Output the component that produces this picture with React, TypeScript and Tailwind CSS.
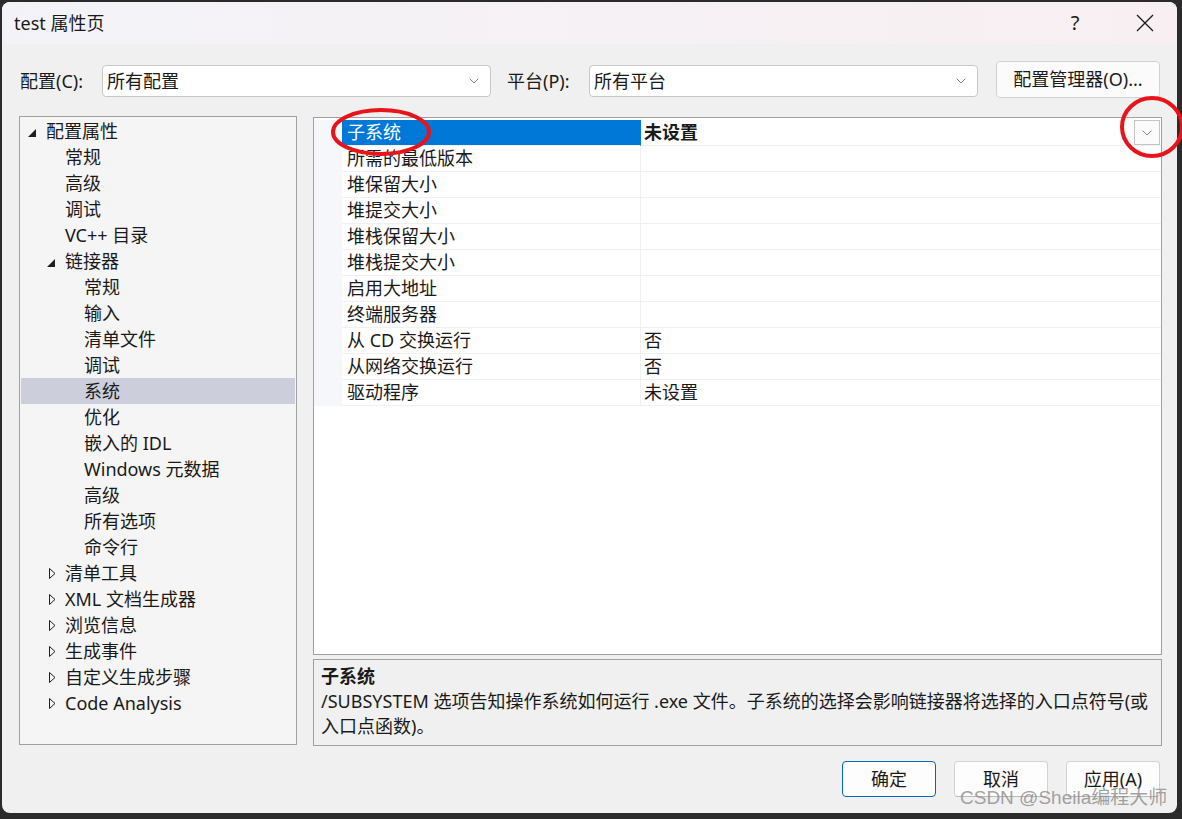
import { ChevronDown } from "lucide-react";

type TreeItem = { label: string; level: number; arrow?: "open" | "closed"; selected?: boolean };

const treeItems: TreeItem[] = [
  { label: "配置属性", level: 0, arrow: "open" },
  { label: "常规", level: 1 },
  { label: "高级", level: 1 },
  { label: "调试", level: 1 },
  { label: "VC++ 目录", level: 1 },
  { label: "链接器", level: 1, arrow: "open" },
  { label: "常规", level: 2 },
  { label: "输入", level: 2 },
  { label: "清单文件", level: 2 },
  { label: "调试", level: 2 },
  { label: "系统", level: 2, selected: true },
  { label: "优化", level: 2 },
  { label: "嵌入的 IDL", level: 2 },
  { label: "Windows 元数据", level: 2 },
  { label: "高级", level: 2 },
  { label: "所有选项", level: 2 },
  { label: "命令行", level: 2 },
  { label: "清单工具", level: 1, arrow: "closed" },
  { label: "XML 文档生成器", level: 1, arrow: "closed" },
  { label: "浏览信息", level: 1, arrow: "closed" },
  { label: "生成事件", level: 1, arrow: "closed" },
  { label: "自定义生成步骤", level: 1, arrow: "closed" },
  { label: "Code Analysis", level: 1, arrow: "closed" },
];

const indent = ["pl-[7px]", "pl-[26px]", "pl-[45px]"];

const props: [string, string][] = [
  ["子系统", "未设置"],
  ["所需的最低版本", ""],
  ["堆保留大小", ""],
  ["堆提交大小", ""],
  ["堆栈保留大小", ""],
  ["堆栈提交大小", ""],
  ["启用大地址", ""],
  ["终端服务器", ""],
  ["从 CD 交换运行", "否"],
  ["从网络交换运行", "否"],
  ["驱动程序", "未设置"],
];

function Combo({ value }: { value: string }) {
  return (
    <div className="mt-[3px] w-[389px] h-[32px] bg-white border border-[#c6c6c6] rounded-[4px] flex items-center pl-[4px] pr-[8px]">
      <span className="flex-1">{value}</span>
      <ChevronDown className="w-[16px] h-[16px] text-[#606060]" strokeWidth={1.2} />
    </div>
  );
}

function TreeArrow({ kind }: { kind?: "open" | "closed" }) {
  if (kind === "open")
    return (
      <svg width="8" height="8" viewBox="0 0 8 8" className="mt-[3px]">
        <polygon points="8,0 8,8 0,8" fill="#1e1e1e" />
      </svg>
    );
  if (kind === "closed")
    return (
      <svg width="7" height="11" viewBox="0 0 7 11" className="ml-[2px]">
        <polygon points="0.5,0.5 6,5.5 0.5,10.5" fill="none" stroke="#1e1e1e" strokeWidth="1" />
      </svg>
    );
  return null;
}

export default function App() {
  return (
    <div className="relative w-[1182px] h-[819px] bg-[#2b2b2b] pl-[2px] pt-[2px] pr-[5px] pb-[6px] font-['Noto_Sans','Noto_Sans_CJK_SC',sans-serif] text-[18px] text-[#1a1a1a]">
      <div className="relative w-full h-full bg-[#f0f0f0] rounded-[8px] overflow-hidden flex flex-col">
        {/* title bar */}
        <div className="h-[42px] shrink-0 flex items-center pl-[12px] bg-gradient-to-r from-[#f3f3f7] to-[#f8eff2]">
          <span className="leading-[20px]">test 属性页</span>
          <div className="ml-auto flex items-center pr-[9px]">
            <span className="w-[46px] text-center text-[20px] leading-[20px]">?</span>
            <span className="w-[24px]" />
            <div className="w-[46px] flex justify-center">
              <svg width="18" height="18" viewBox="0 0 18 18">
                <path d="M1 1L17 17M17 1L1 17" stroke="#1a1a1a" strokeWidth="1.3" />
              </svg>
            </div>
          </div>
        </div>

        {/* config row */}
        <div className="mt-[17px] ml-[18px] h-[37px] flex items-center shrink-0">
          <span className="mt-[3px] w-[82px]">配置(C):</span>
          <Combo value="所有配置" />
          <span className="mt-[3px] w-[82px] ml-[16px]">平台(P):</span>
          <Combo value="所有平台" />
          <button className="ml-[18px] w-[164px] h-[37px] bg-[#fbfbfb] border border-[#d2d2d2] rounded-[4px]">
            配置管理器(O)...
          </button>
        </div>

        {/* main area */}
        <div className="mt-[18px] ml-[17px] flex items-start gap-[16px]">
          <div className="w-[278px] h-[629px] bg-[#f5f5f5] border border-[#a0a0a0] p-[1px] flex flex-col">
            {treeItems.map((t, i) => (
              <div
                key={i}
                className={`h-[26px] flex items-center ${indent[t.level]} ${t.selected ? "bg-[#cccedb]" : ""}`}
              >
                <div className="w-[18px] flex items-center">
                  <TreeArrow kind={t.arrow} />
                </div>
                <span className="leading-[26px] whitespace-nowrap">{t.label}</span>
              </div>
            ))}
          </div>

          <div className="flex flex-col gap-[4px] pt-[1px]">
            <div className="w-[849px] h-[538px] bg-white border border-[#a0a0a0] pt-[2px]">
              {props.map(([name, value], i) => (
                <div key={i} className="h-[26px] flex">
                  <div className="w-[28px] bg-[#f5f7fb]" />
                  <div
                    className={`w-[299px] h-[26px] pl-[5px] leading-[25px] border-r border-b border-[#f0f0f0] whitespace-nowrap ${
                      i === 0 ? "bg-[#0078d7] text-white border-r-[#0078d7]" : ""
                    }`}
                  >
                    {name}
                  </div>
                  <div className="flex-1 h-[26px] pl-[3px] leading-[25px] border-b border-[#f0f0f0] flex items-start">
                    <span className={i === 0 ? "font-bold flex-1" : "flex-1"}>{value}</span>
                    {i === 0 && (
                      <div className="w-[26px] h-[25px] mr-[1px] border border-[#c4c4c4] bg-[#fbfbfb] flex items-center justify-center">
                        <ChevronDown className="w-[16px] h-[16px] text-[#707070]" strokeWidth={1.3} />
                      </div>
                    )}
                  </div>
                </div>
              ))}
            </div>
            <div className="w-[849px] h-[87px] border border-[#a0a0a0] pl-[7px] pt-[3px]">
              <div className="font-bold leading-[26px]">子系统</div>
              <div className="leading-[25px] whitespace-nowrap">
                /SUBSYSTEM 选项告知操作系统如何运行 .exe 文件。子系统的选择会影响链接器将选择的入口点符号(或
              </div>
              <div className="leading-[25px]">入口点函数)。</div>
            </div>
          </div>
        </div>

        {/* buttons */}
        <div className="mt-[15px] pr-[17px] flex justify-end gap-[18px]">
          <button className="w-[94px] h-[36px] bg-[#fdfdfd] border border-[#0067c0] rounded-[4px]">确定</button>
          <button className="w-[94px] h-[36px] bg-[#fdfdfd] border border-[#d2d2d2] border-b-[#b8b8b8] rounded-[4px]">取消</button>
          <button className="w-[94px] h-[36px] bg-[#fdfdfd] border border-[#d2d2d2] border-b-[#b8b8b8] rounded-[4px]">应用(A)</button>
        </div>

        <span className="absolute left-[958px] top-[784px] text-[19px] leading-[24px] text-[#8a8a8a]/80 font-['Liberation_Sans','Noto_Sans_CJK_SC',sans-serif] whitespace-nowrap">
          CSDN @Sheila编程大师
        </span>
      </div>

      {/* red annotations drawn over the screenshot */}
      <svg className="absolute left-0 top-0 pointer-events-none" width="1182" height="819" viewBox="0 0 1182 819">
        <ellipse cx="381" cy="132" rx="48" ry="22" fill="none" stroke="#e8141c" strokeWidth="4" />
        <ellipse cx="1152" cy="127" rx="30" ry="29" fill="none" stroke="#e8141c" strokeWidth="4" />
      </svg>
    </div>
  );
}
